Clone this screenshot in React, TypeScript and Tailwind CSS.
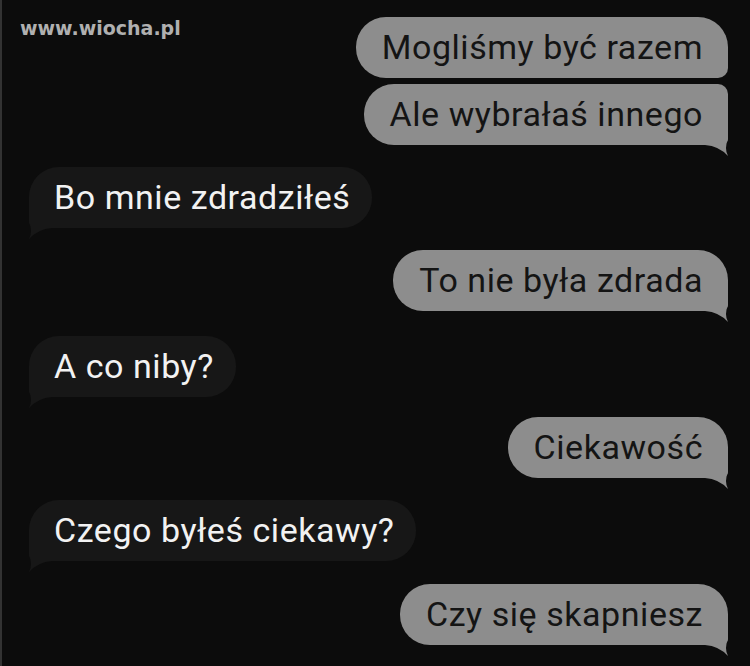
import React from "react";

type Msg = { text: string; side: "left" | "right"; mt: string; tail: boolean; round: string };

const msgs: Msg[] = [
  { text: "Mogliśmy być razem", side: "right", mt: "mt-[17px]", tail: false, round: "rounded-[30px] rounded-br-[10px]" },
  { text: "Ale wybrałaś innego", side: "right", mt: "mt-[6px]", tail: true, round: "rounded-[30px] rounded-tr-[10px] rounded-br-[6px]" },
  { text: "Bo mnie zdradziłeś", side: "left", mt: "mt-[22px]", tail: true, round: "rounded-[30px] rounded-bl-[6px]" },
  { text: "To nie była zdrada", side: "right", mt: "mt-[22px]", tail: true, round: "rounded-[30px] rounded-br-[6px]" },
  { text: "A co niby?", side: "left", mt: "mt-[25px]", tail: true, round: "rounded-[30px] rounded-bl-[6px]" },
  { text: "Ciekawość", side: "right", mt: "mt-[20px]", tail: true, round: "rounded-[30px] rounded-br-[6px]" },
  { text: "Czego byłeś ciekawy?", side: "left", mt: "mt-[22px]", tail: true, round: "rounded-[30px] rounded-bl-[6px]" },
  { text: "Czy się skapniesz", side: "right", mt: "mt-[23px]", tail: true, round: "rounded-[30px] rounded-br-[6px]" },
];

function TailRight() {
  return (
    <svg className="absolute right-[-3px] bottom-[-12px]" width="34" height="24" viewBox="0 0 34 24">
      <path d="M8 12 Q22 13 31 23 Q27 16 31 5 L31 0 L8 0 Z" fill="#8d8d8d" />
    </svg>
  );
}

function TailLeft() {
  return (
    <svg className="absolute left-[-3px] bottom-[-12px]" width="34" height="24" viewBox="0 0 34 24">
      <path d="M26 12 Q12 13 3 23 Q7 16 3 5 L3 0 L26 0 Z" fill="#171717" />
    </svg>
  );
}

function Bubble({ m }: { m: Msg }) {
  const right = m.side === "right";
  return (
    <div className={`flex ${m.mt} ${right ? "justify-end pr-[22px]" : "justify-start pl-[27px]"}`}>
      <div
        className={`relative h-[61px] leading-[61px] text-[34px] tracking-[0.55px] whitespace-nowrap ${m.round} ${
          right ? "bg-[#8d8d8d] text-[#141414] pl-[26px] pr-[25px]" : "bg-[#171717] text-[#f2f2f2] pl-[25px] pr-[22px]"
        }`}
      >
        {m.text}
        {m.tail && (right ? <TailRight /> : <TailLeft />)}
      </div>
    </div>
  );
}

export default function App() {
  return (
    <div
      className="relative w-[750px] h-[666px] overflow-hidden bg-[#0c0c0c] border-l-2 border-[#333333]"
      style={{ fontFamily: "Roboto, 'Noto Sans', sans-serif" }}
    >
      <div
        className="absolute left-[18px] top-[14px] text-[19px] font-bold text-[#b0b0b0]"
        style={{ fontFamily: "'DejaVu Sans', sans-serif" }}
      >
        www.wiocha.pl
      </div>
      <div className="flex flex-col">
        {msgs.map((m, i) => (
          <Bubble key={i} m={m} />
        ))}
      </div>
    </div>
  );
}
